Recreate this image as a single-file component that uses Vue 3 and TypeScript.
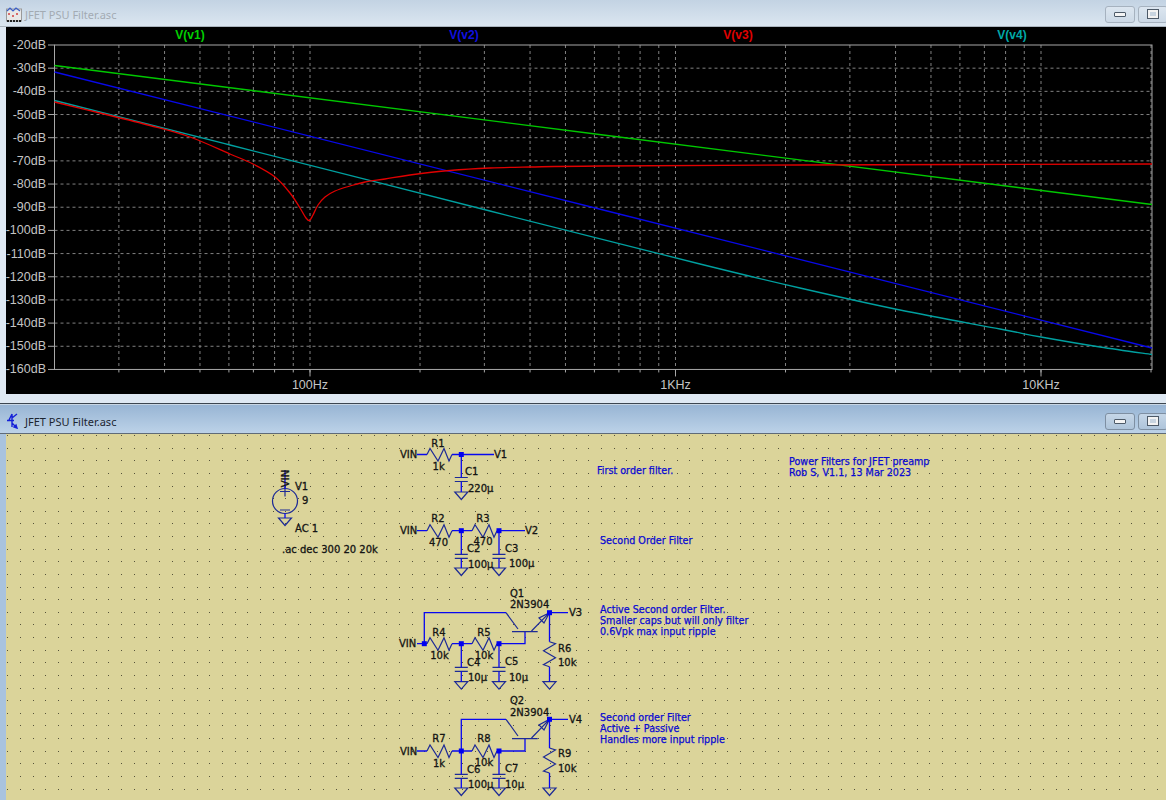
<script setup lang="ts">
const dbTop = 45
const dbStep = 23.175
const plotLeft = 54.5
const plotRight = 1152
const plotBottom = dbTop + dbStep * 14

const dbRows = Array.from({ length: 15 }, (_, i) => ({
  label: `-${20 + i * 10}dB`,
  y: dbTop + dbStep * i,
}))

const freqX = (f: number) => 310 + Math.log10(f / 100) * 365.5
const gridFreqs: number[] = []
for (const decade of [10, 100, 1000, 10000]) {
  for (let m = 1; m <= 9; m++) {
    const f = m * decade
    if (f > 20 && freqX(f) < plotRight) gridFreqs.push(f)
  }
}
const gridX = gridFreqs.map((f) => freqX(f))

const freqLabels = [
  { text: "100Hz", x: freqX(100) },
  { text: "1KHz", x: freqX(1000) },
  { text: "10KHz", x: freqX(10000) },
]

const traceHeads = [
  { text: "V(v1)", x: 190, color: "#00d000" },
  { text: "V(v2)", x: 464, color: "#1010e0" },
  { text: "V(v3)", x: 738, color: "#e00000" },
  { text: "V(v4)", x: 1012, color: "#00a8a8" },
]

// catmull-rom through the read-off points so the traces have no corners
const smooth = (pts: number[][]) => {
  let d = `M${pts[0][0]} ${pts[0][1]}`
  for (let i = 0; i < pts.length - 1; i++) {
    const p0 = pts[Math.max(i - 1, 0)]
    const p1 = pts[i]
    const p2 = pts[i + 1]
    const p3 = pts[Math.min(i + 2, pts.length - 1)]
    const c1 = [p1[0] + (p2[0] - p0[0]) / 6, p1[1] + (p2[1] - p0[1]) / 6]
    const c2 = [p2[0] - (p3[0] - p1[0]) / 6, p2[1] - (p3[1] - p1[1]) / 6]
    d += `C${c1[0]} ${c1[1]} ${c2[0]} ${c2[1]} ${p2[0]} ${p2[1]}`
  }
  return d
}

const traces = [
  { color: "#00c800", d: smooth([[54.5, 65.5], [1152, 204.5]]) },
  { color: "#0808e8", d: smooth([[54.5, 72], [1152, 348]]) },
  {
    color: "#00a0a0",
    d: smooth([
      [54.5, 100.5], [230, 145], [490, 211], [700, 264], [800, 288], [900, 310],
      [1000, 329], [1041, 337], [1100, 347], [1152, 354.5],
    ]),
  },
  {
    color: "#e00000",
    d: smooth([
      [54.5, 102], [100, 113], [150, 125.5], [190, 137], [230, 154], [253, 164], [275, 177],
      [290, 193], [300, 208], [306, 218], [309.5, 220.5], [313, 215], [318, 205], [325, 197],
      [335, 191], [350, 186], [365, 182], [385, 179], [410, 175], [450, 170.5], [490, 168],
      [530, 167], [600, 166], [800, 165], [1152, 164],
    ]),
  },
]

// sheet dots snapped to whole pixels so they stay crisp
let dotPath = ""
for (let row = 0; row < 29; row++) {
  for (let col = -1; col < 91; col++) {
    const x = Math.round(20 + col * 12.63)
    const y = Math.round(435 + row * 12.63)
    dotPath += `M${x} ${y}h1v1h-1z`
  }
}

// schematic symbols, all in page coordinates
const zigH = (x: number, y: number) =>
  `M${x} ${y}l3 -6l8 12.5l6 -12.5l5 12.5l3 -6.5`
const zigV = (x: number, y: number) =>
  `M${x} ${y}l6 2l-12 7l12 7l-12 7l6 2`
const ground = (x: number, y: number) => `M${x - 6.5} ${y}h13l-6.5 7.5z`
const plates = (x: number, y: number) => `M${x - 6.5} ${y}h13M${x - 6.5} ${y + 4}h13`

const wires = [
  "M417 454.5H427M452 454.5H494M461.3 454.5V477.5M461.3 482V492",
  "M417 530.7H427M452 530.7H472M497 530.7H525M461.3 530.7V554.3M461.3 558.5V568M499 530.7V554.3M499 558.5V568",
  "M417 643.7H427M424.3 643.7V612.7H506M452 643.7H472M497 643.7H525V632M461.3 643.7V667.3M461.3 671.5V681.7M499 643.7V667.3M499 671.5V681.7M549.5 612.7H568M549.5 612.7V641.7M549.5 666.7V681.7",
  "M417 751H427M452 751H472M461.3 751V719.3H506M497 751H525V739M461.3 751V774.3M461.3 778.5V788M499 751V774.3M499 778.5V788M549.5 719.3H568M549.5 719.3V748M549.5 773V788",
  "M285 470V488.5M285 513.5V518",
]

const symbols = [
  ...[[427, 454.5], [427, 530.7], [472, 530.7], [427, 643.7], [472, 643.7], [427, 751], [472, 751]].map(
    ([x, y]) => zigH(x, y),
  ),
  zigV(549.5, 641.7),
  zigV(549.5, 748),
  ...[[461.3, 477.5], [461.3, 554.3], [499, 554.3], [461.3, 667.3], [499, 667.3], [461.3, 774.3], [499, 774.3]].map(
    ([x, y]) => plates(x, y),
  ),
  ...[[461.3, 492], [285, 518], [461.3, 568], [499, 568], [461.3, 681.7], [499, 681.7], [549.5, 681.7], [461.3, 788], [499, 788], [549.5, 788]].map(
    ([x, y]) => ground(x, y),
  ),
  // transistors
  "M506 612.7L518 629M512 631.7H537.7M531.5 631L549.5 612.7M549.5 612.7L539 618L544 623Z",
  "M506 719.3L518 736M512 738.7H537.7M531.5 738L549.5 719.3M549.5 719.3L539 725L544 730Z",
  // source plus and minus
  "M280 491.5h10M285 486.5v10M280 510h10",
]

const junctions = [
  [461.3, 454.5], [461.3, 530.7], [499, 530.7], [424.3, 643.7], [461.3, 643.7], [499, 643.7],
  [549.5, 612.7], [461.3, 751], [499, 751], [549.5, 719.3],
]

const labels: { t: string; x: number; y: number; mid?: boolean }[] = [
  { t: "VIN", x: 400, y: 454.5 },
  { t: "R1", x: 438, y: 443.5, mid: true },
  { t: "1k", x: 438.7, y: 466, mid: true },
  { t: "V1", x: 494, y: 454.5 },
  { t: "C1", x: 465, y: 471 },
  { t: "220µ", x: 468, y: 488 },
  { t: "V1", x: 295, y: 486 },
  { t: "9", x: 302, y: 500 },
  { t: "AC 1", x: 295, y: 528 },
  { t: ".ac dec 300 20 20k", x: 282, y: 549 },
  { t: "VIN", x: 400, y: 530.7 },
  { t: "R2", x: 438, y: 518.5, mid: true },
  { t: "470", x: 438.5, y: 542, mid: true },
  { t: "R3", x: 483, y: 518.5, mid: true },
  { t: "470", x: 483, y: 541, mid: true },
  { t: "V2", x: 525, y: 530.7 },
  { t: "C2", x: 467, y: 548 },
  { t: "100µ", x: 468, y: 564 },
  { t: "C3", x: 505, y: 548 },
  { t: "100µ", x: 509, y: 563 },
  { t: "VIN", x: 399, y: 643.7 },
  { t: "R4", x: 439, y: 632, mid: true },
  { t: "10k", x: 439.5, y: 655, mid: true },
  { t: "R5", x: 484, y: 632, mid: true },
  { t: "10k", x: 484, y: 655, mid: true },
  { t: "Q1", x: 510, y: 593 },
  { t: "2N3904", x: 510, y: 604 },
  { t: "V3", x: 569, y: 612.7 },
  { t: "R6", x: 558, y: 648 },
  { t: "10k", x: 558, y: 662 },
  { t: "C4", x: 467, y: 662 },
  { t: "10µ", x: 468, y: 677 },
  { t: "C5", x: 505, y: 661 },
  { t: "10µ", x: 509, y: 677 },
  { t: "VIN", x: 400, y: 751 },
  { t: "R7", x: 439, y: 738, mid: true },
  { t: "1k", x: 439, y: 763, mid: true },
  { t: "R8", x: 484, y: 738, mid: true },
  { t: "10k", x: 484, y: 762, mid: true },
  { t: "Q2", x: 510, y: 700.5 },
  { t: "2N3904", x: 510, y: 712 },
  { t: "V4", x: 569, y: 719 },
  { t: "R9", x: 558, y: 753 },
  { t: "10k", x: 558, y: 768 },
  { t: "C6", x: 467, y: 769 },
  { t: "100µ", x: 468, y: 784 },
  { t: "C7", x: 505, y: 768 },
  { t: "10µ", x: 505, y: 784 },
]

const notes = [
  { t: "First order filter.", x: 597, y: 470.5 },
  { t: "Power Filters for JFET preamp", x: 789, y: 461.5 },
  { t: "Rob S, V1.1, 13 Mar 2023", x: 789, y: 472.5 },
  { t: "Second Order Filter", x: 600, y: 540 },
  { t: "Active Second order Filter.", x: 600, y: 609 },
  { t: "Smaller caps but will only filter", x: 600, y: 620 },
  { t: "0.6Vpk max input ripple", x: 600, y: 631.5 },
  { t: "Second order Filter", x: 600, y: 717 },
  { t: "Active + Passive", x: 600, y: 728 },
  { t: "Handles more input ripple", x: 600, y: 739 },
]
</script>

<template>
  <div class="desktop">
    <section class="window inactive">
      <header class="titlebar">
        <svg class="app-icon" viewBox="0 0 16 16" width="16" height="16">
          <rect x="0.5" y="3" width="15" height="12" fill="#e8e8e8" stroke="#9a9a9a" />
          <path d="M1 5l3 -3l3 3l3 -3l4 3" fill="none" stroke="#3a5fc8" stroke-width="1.2" />
          <path d="M2 8h2M6 10h2M10 8h2" stroke="#d04040" stroke-width="1.4" />
          <path d="M1 15h14" stroke="#222" stroke-width="2" stroke-dasharray="2 1" />
        </svg>
        <span class="title">JFET PSU Filter.asc</span>
        <span class="btn"><i class="min"></i></span>
        <span class="btn last"><i class="restore"></i></span>
      </header>
      <svg class="plot" viewBox="6 27 1160 367" width="1160" height="367">
        <rect x="6" y="27" width="1160" height="367" fill="#000" />
        <g class="grid">
          <line v-for="x in gridX" :key="x" :x1="x" :x2="x" :y1="dbTop" :y2="plotBottom" />
          <line v-for="r in dbRows.slice(1, -1)" :key="r.y" :x1="plotLeft" :x2="plotRight" :y1="r.y" :y2="r.y" />
        </g>
        <g class="axis">
          <rect :x="plotLeft" :y="dbTop" :width="plotRight - plotLeft" :height="plotBottom - dbTop" fill="none" />
          <line v-for="r in dbRows" :key="r.label" x1="48" :x2="plotLeft" :y1="r.y" :y2="r.y" />
          <line v-for="x in gridX" :key="x" :x1="x" :x2="x" :y1="plotBottom" :y2="plotBottom + 3" />
          <line v-for="f in freqLabels" :key="f.text" :x1="f.x" :x2="f.x" :y1="plotBottom" :y2="plotBottom + 7" />
        </g>
        <path
          v-for="t in traces"
          :key="t.color"
          :d="t.d"
          :stroke="t.color"
          fill="none"
          stroke-width="1.3"
        />
        <text v-for="r in dbRows" :key="r.label" class="axis-text" x="46" :y="r.y" text-anchor="end">{{ r.label }}</text>
        <text v-for="f in freqLabels" :key="f.text" class="axis-text" :x="f.x" y="385" text-anchor="middle">{{ f.text }}</text>
        <text
          v-for="h in traceHeads"
          :key="h.text"
          class="trace-head"
          :x="h.x"
          y="35"
          text-anchor="middle"
          :fill="h.color"
        >{{ h.text }}</text>
      </svg>
    </section>

    <section class="window active">
      <header class="titlebar">
        <svg class="app-icon" viewBox="0 0 16 16" width="16" height="16">
          <path d="M6 1L3 7M1 7.5h7M6 1v13M6 5l5 -4M6 10l5 5M11 15l-3 -1l2 -2z" fill="none" stroke="#1420d8" stroke-width="1.4" />
        </svg>
        <span class="title">JFET PSU Filter.asc</span>
        <span class="btn"><i class="min"></i></span>
        <span class="btn last"><i class="restore"></i></span>
      </header>
      <svg class="sheet" viewBox="6 434 1160 366" width="1160" height="366">
        <rect x="6" y="434" width="1160" height="366" fill="#dbd49a" />
        <path :d="dotPath" fill="#55523a" />
        <circle cx="285" cy="501" r="12.5" class="sym" />
        <path v-for="d in symbols" :key="d" :d="d" class="sym" />
        <path v-for="d in wires" :key="d" :d="d" class="wire" />
        <rect v-for="j in junctions" :key="j.join()" :x="j[0] - 2.5" :y="j[1] - 2.5" width="5" height="5" fill="#0000f0" />
        <text class="part" transform="translate(285 478.5) rotate(-90)" text-anchor="middle">VIN</text>
        <text
          v-for="l in labels"
          :key="l.t + l.x + l.y"
          class="part"
          :x="l.x"
          :y="l.y"
          :text-anchor="l.mid ? 'middle' : 'start'"
        >{{ l.t }}</text>
        <text v-for="n in notes" :key="n.t" class="note" :x="n.x" :y="n.y">{{ n.t }}</text>
      </svg>
    </section>
  </div>
</template>

<style scoped>
.desktop {
  width: 1166px;
  height: 800px;
  overflow: hidden;
  display: flex;
  flex-direction: column;
  font-family: "Liberation Sans", Arial, sans-serif;
}

.window {
  display: flex;
  flex-direction: column;
  padding-left: 6px;
}

.inactive {
  height: 404px;
  background: #dfe9f3;
  border-bottom: 1px solid #3c4650;
  box-sizing: border-box;
  padding-bottom: 9px;
}

.active {
  height: 396px;
  background: #a9c3de;
}

.titlebar {
  display: flex;
  align-items: center;
  box-sizing: border-box;
  margin-left: -6px;
  padding-left: 6px;
  flex-shrink: 0;
}

.inactive .titlebar {
  height: 27px;
  padding-top: 2px;
  background: linear-gradient(#c3d3e3, #dbe6f0);
  border-bottom: 1px solid #aab4be;
  color: #a3abb3;
}

.active .titlebar {
  height: 30px;
  padding-top: 4px;
  background: linear-gradient(#98b5d4, #bcd2e8);
  border-bottom: 1px solid #5f6b78;
  border-top: 1px solid #c8d6e4;
  color: #1c2530;
}

.app-icon {
  flex-shrink: 0;
}

.title {
  margin-left: 3px;
  font-family: "Noto Sans", "Liberation Sans", sans-serif;
  font-size: 11px;
  flex: 1;
}

.btn {
  width: 30px;
  height: 17px;
  box-sizing: border-box;
  border: 1px solid #7e8fa2;
  border-radius: 3px;
  margin-right: 3px;
  display: flex;
  align-items: center;
  justify-content: center;
  background: linear-gradient(#c5d6e7, #aec4da);
}

.inactive .btn {
  background: linear-gradient(#dce6f0, #ccd9e6);
  border-color: #a6b2bf;
}

.btn.last {
  margin-right: -2px;
}

.min {
  display: block;
  width: 10px;
  height: 3px;
  background: #f4f4f4;
  border: 1px solid #4d5a68;
  border-radius: 1px;
}

.restore {
  display: block;
  width: 6px;
  height: 4px;
  background: #c8d4e0;
  border: 2px solid #f2f2f2;
  outline: 1px solid #4d5a68;
}

.plot,
.sheet {
  display: block;
  flex-shrink: 0;
}

.grid line {
  stroke: #808080;
  stroke-width: 1;
  stroke-dasharray: 3 3;
}

.axis rect,
.axis line {
  stroke: #a8a8a8;
  stroke-width: 1;
}

.axis-text {
  font-family: "Liberation Sans", Arial, sans-serif;
  font-size: 12.5px;
  fill: #c4c4c4;
  dominant-baseline: central;
}

.trace-head {
  font-family: "Liberation Sans", Arial, sans-serif;
  font-size: 12px;
  font-weight: 700;
  dominant-baseline: central;
}

.sym {
  fill: none;
  stroke: #1d2a96;
  stroke-width: 1.2;
}

.wire {
  fill: none;
  stroke: #0808f0;
  stroke-width: 1.3;
}

.part {
  font-family: "DejaVu Sans", sans-serif;
  font-size: 10px;
  fill: #141414;
  stroke: #141414;
  stroke-width: 0.3;
  dominant-baseline: central;
}

.note {
  font-family: "DejaVu Sans", sans-serif;
  font-size: 9.6px;
  fill: #0a0ad2;
  stroke: #0a0ad2;
  stroke-width: 0.25;
  dominant-baseline: central;
}
</style>

<style>
html,
body {
  background: #dfe9f3;
}
</style>
